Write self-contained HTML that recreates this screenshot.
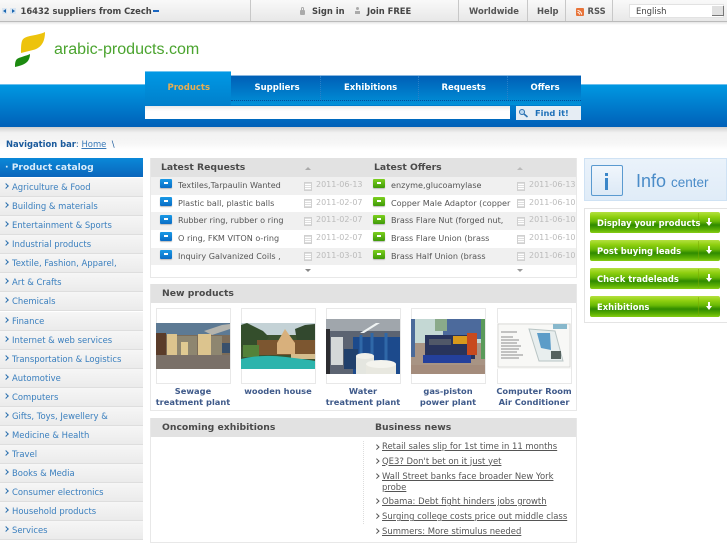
<!DOCTYPE html>
<html><head><meta charset="utf-8">
<style>
html,body{margin:0;padding:0;background:#fff}
#p{position:relative;width:727px;height:545px;overflow:hidden;font-family:"DejaVu Sans","Liberation Sans",sans-serif;font-size:8.45px;letter-spacing:0;background:#fff}
#p div,#p svg,#p a{position:absolute}
.t{white-space:nowrap;line-height:12px}
.b{font-weight:bold}
.top{color:#444;font-weight:bold;font-size:8.4px;top:5px}
.sep{top:0;width:1px;height:21px;background:#c8c8c8}
.nav{color:#fff;font-weight:bold;top:81.500px;font-size:8.5px}
.cat{left:0;width:143px;height:18px;background:linear-gradient(#f6f6f6,#ebebeb);border-bottom:1px solid #dedede}
.cat span{position:absolute;left:12px;top:3px;color:#3a7fbe;white-space:nowrap;line-height:12px}
.cat i{position:absolute;left:4px;top:6px;width:3px;height:3px;border-top:1.300px solid #2a6fae;border-right:1.300px solid #2a6fae;transform:rotate(45deg)}
.hd{background:#e2e2e2;height:19px}
.h{font-weight:bold;color:#4a4a4a;font-size:9.25px;white-space:nowrap;line-height:12px}
.r{height:18px;left:151px;width:425px}
.tx{color:#555;white-space:nowrap;line-height:12px;font-size:8.1px}
.dt{color:#bbb;white-space:nowrap;line-height:12px;font-size:8px}
.cal{width:6px;height:7px;border:1px solid #d0d0d0;background:repeating-linear-gradient(#dedede 0 1px,#fff 1px 2px)}
.ib{width:12px;height:9px;border-radius:1px;background:linear-gradient(#1a9ae6,#0a6cc4);box-shadow:0 1px 1px #bbb}
.ig{width:12px;height:9px;border-radius:1px;background:linear-gradient(#7cd01e,#3f9a08);box-shadow:0 1px 1px #bbb}
.ib:after,.ig:after{content:"";position:absolute;left:4px;top:3px;width:4px;height:2px;background:#fff}
.th{width:73px;height:74px;border:1px solid #e8e8e8;background:#fff}
.cap{color:#3f5a8a;font-weight:bold;text-align:center;line-height:11px;width:90px;font-size:8.3px}
.gb{left:590px;width:130px;height:21px;border-radius:2px;background:linear-gradient(#b4e040 0,#90d010 22%,#68b806 45%,#2f8a00 62%,#5cb004 85%,#86cc14 100%)}
.gb span{position:absolute;left:7px;top:4.500px;color:#fff;font-weight:bold;white-space:nowrap;line-height:12px;font-size:8.4px}
.gb i{position:absolute;left:116px;top:10px;width:0;height:0;border-top:4px solid #fff;border-left:3px solid transparent;border-right:3px solid transparent}
.gb b{position:absolute;left:118px;top:6px;width:2px;height:4px;background:#fff}
.gb u{position:absolute;left:108px;top:1px;width:1px;height:19px;background:rgba(120,170,0,.5)}
.n{left:382px;color:#555;text-decoration:underline;white-space:nowrap;line-height:11px}
.ar{left:375px;width:2.500px;height:2.500px;border-top:1px solid #555;border-right:1px solid #555;transform:rotate(45deg)}
</style></head><body><div id="p">

<div style="left:0;top:0;width:727px;height:21px;background:linear-gradient(#f9f9f9,#e8e8e8);border-bottom:1px solid #bbb"></div>
<div style="left:0;top:22px;width:727px;height:3px;background:linear-gradient(#e4e4e4,#fff)"></div>
<div style="left:2px;top:8px;width:5px;height:6px;background:#d8e4f0"></div>
<div style="left:10px;top:8px;width:6px;height:6px;background:#d8e4f0"></div>
<div style="left:3px;top:9px;border-right:3px solid #1a66b0;border-top:2px solid transparent;border-bottom:2px solid transparent"></div>
<div style="left:12px;top:9px;border-left:3px solid #1a66b0;border-top:2px solid transparent;border-bottom:2px solid transparent"></div>
<div class="t top" style="left:20.500px">16432 suppliers from Czech</div>
<div style="left:153px;top:10px;width:6px;height:2px;background:#1a66c0"></div>
<div class="sep" style="left:250px"></div>
<div style="left:300px;top:10px;width:5px;height:5px;background:#aaa;border-radius:1px"></div>
<div style="left:301px;top:7px;width:3px;height:4px;border:1px solid #aaa;border-bottom:0;border-radius:2px 2px 0 0;box-sizing:border-box"></div>
<div class="t top" style="left:312px">Sign in</div>
<div style="left:356px;top:7px;width:3px;height:3px;background:#aaa;border-radius:2px"></div>
<div style="left:355px;top:11px;width:5px;height:3px;background:#aaa"></div>
<div class="t top" style="left:367px">Join FREE</div>
<div class="sep" style="left:458px"></div>
<div class="t top" style="left:469px;color:#555">Worldwide</div>
<div class="sep" style="left:527px"></div>
<div class="t top" style="left:537px;color:#555">Help</div>
<div class="sep" style="left:565px"></div>
<div style="left:576px;top:8px;width:8px;height:8px;background:#e8743a;border-radius:1px"></div>
<svg style="left:576px;top:8px" width="8" height="8"><path d="M1.500 2.500A4 4 0 0 1 5.500 6.500M1.500 4.500A2 2 0 0 1 3.500 6.500" stroke="#fff" fill="none"/></svg>
<div class="t top" style="left:587.500px;color:#555">RSS</div>
<div class="sep" style="left:612px"></div>
<div style="left:629px;top:4px;width:93px;height:12px;background:#fff;border:1px solid #e2e2e2"></div>
<div class="t" style="left:636px;top:5px;color:#444">English</div>
<div style="left:712px;top:6px;width:11px;height:9px;background:#e0e0e0;border-right:1px solid #777;border-bottom:1px solid #777"></div>

<svg style="left:0;top:0" width="60" height="75"><path d="M21 53C21 48 21 44 22 41C23 38 26 37 30 36C35 35 41 34 45 32C45 37 44 41 42 44C40 47 37 49 33 50C29 51 25 52 21 53Z" fill="#edc30c"/><path d="M15 67C15 64 15 61 17 59C20 57 26 56 30 54C30 57 29 60 27 62C24 65 19 66 15 67Z" fill="#1c8a10"/></svg>
<div class="t" style="left:54px;top:39px;font-family:'Liberation Sans',sans-serif;font-size:16.05px;line-height:20px;color:#4ba42f">arabic-products.com</div>

<div style="left:0;top:84px;width:727px;height:43px;background:linear-gradient(#0098e2,#0060b8);border-top:1px solid #6cc0ee;box-sizing:border-box"></div>
<div style="left:0;top:127px;width:727px;height:23px;background:linear-gradient(#cfcfcf,#f2f2f2 25%,#f6f6f6 70%,#fff)"></div>
<div style="left:231px;top:75px;width:350px;height:30px;background:linear-gradient(#005fb6,#0090d8);border-top:1px solid #8ab8e0;box-sizing:border-box"></div>
<div style="left:231px;top:100px;width:350px;height:0;border-top:1px dotted #004f9a"></div>
<div style="left:320px;top:76px;width:0;height:24px;border-left:1px dotted #2a80c8"></div>
<div style="left:418px;top:76px;width:0;height:24px;border-left:1px dotted #2a80c8"></div>
<div style="left:507px;top:76px;width:0;height:24px;border-left:1px dotted #2a80c8"></div>
<div style="left:145px;top:71px;width:86px;height:34px;background:linear-gradient(#0098e4,#0080cc);border-top:1px solid #70c4f0;box-sizing:border-box"></div>
<div class="t nav" style="left:167.500px;color:#e6ae52">Products</div>
<div class="t nav" style="left:254.500px">Suppliers</div>
<div class="t nav" style="left:344px">Exhibitions</div>
<div class="t nav" style="left:441.500px">Requests</div>
<div class="t nav" style="left:530.500px">Offers</div>
<div style="left:145px;top:106px;width:365px;height:13px;background:linear-gradient(#e8e8e8,#fff 40%)"></div>
<div style="left:516px;top:106px;width:65px;height:14px;background:#e6edf4"></div>
<svg style="left:518px;top:108px" width="11" height="10"><circle cx="4" cy="4" r="2.500" fill="#bcd8f0" stroke="#2a70b0"/><path d="M6 6L9.500 9" stroke="#2a70b0" stroke-width="1.500"/></svg>
<div class="t b" style="left:535px;top:107px;color:#1e70b8;font-size:8.3px">Find it!</div>

<div class="t" style="left:6px;top:137.500px;color:#1a5a9c"><b style="font-size:8.4px">Navigation bar</b>: <span style="color:#3a7ab8;text-decoration:underline">Home</span>&nbsp; \</div>

<div style="left:0;top:158px;width:143px;height:19px;background:linear-gradient(#0a88d8,#0a66bc)"></div>
<div class="t b" style="left:5px;top:161.500px;color:#d8ecfa;font-size:9.2px">&middot;&nbsp;Product catalog</div>
<div class="cat" style="top:178px"><i></i><span>Agriculture &amp; Food</span></div>
<div class="cat" style="top:197px"><i></i><span>Building &amp; materials</span></div>
<div class="cat" style="top:216px"><i></i><span>Entertainment &amp; Sports</span></div>
<div class="cat" style="top:235px"><i></i><span>Industrial products</span></div>
<div class="cat" style="top:254px"><i></i><span>Textile, Fashion, Apparel,</span></div>
<div class="cat" style="top:273px"><i></i><span>Art &amp; Crafts</span></div>
<div class="cat" style="top:292px"><i></i><span>Chemicals</span></div>
<div class="cat" style="top:312px"><i></i><span>Finance</span></div>
<div class="cat" style="top:331px"><i></i><span>Internet &amp; web services</span></div>
<div class="cat" style="top:350px"><i></i><span>Transportation &amp; Logistics</span></div>
<div class="cat" style="top:369px"><i></i><span>Automotive</span></div>
<div class="cat" style="top:388px"><i></i><span>Computers</span></div>
<div class="cat" style="top:407px"><i></i><span>Gifts, Toys, Jewellery &amp;</span></div>
<div class="cat" style="top:426px"><i></i><span>Medicine &amp; Health</span></div>
<div class="cat" style="top:445px"><i></i><span>Travel</span></div>
<div class="cat" style="top:464px"><i></i><span>Books &amp; Media</span></div>
<div class="cat" style="top:483px"><i></i><span>Consumer electronics</span></div>
<div class="cat" style="top:502px"><i></i><span>Household products</span></div>
<div class="cat" style="top:521px"><i></i><span>Services</span></div>

<div style="left:150px;top:158px;width:425px;height:118px;border:1px solid #e8e8e8"></div>
<div class="hd" style="left:151px;top:158px;width:425px"></div>
<div class="h" style="left:161px;top:162px">Latest Requests</div>
<div class="h" style="left:374px;top:162px">Latest Offers</div>
<div style="left:305px;top:166.500px;border-bottom:3.500px solid #aaa;border-left:3.500px solid transparent;border-right:3.500px solid transparent"></div>
<div style="left:517px;top:166.500px;border-bottom:3.500px solid #bbb;border-left:3.500px solid transparent;border-right:3.500px solid transparent"></div>
<div class="r" style="top:177px;background:#f0f0f0"></div>
<div class="r" style="top:212px;background:#f0f0f0"></div>
<div class="r" style="top:248px;height:17px;background:#f0f0f0"></div>

<div class="ib" style="left:160px;top:179px"></div><div class="t tx" style="left:178px;top:179px">Textiles,Tarpaulin Wanted</div><div class="cal" style="left:304px;top:182px"></div><div class="t dt" style="left:316px;top:179px">2011-06-13</div>
<div class="ib" style="left:160px;top:197px"></div><div class="t tx" style="left:178px;top:197px">Plastic ball, plastic balls</div><div class="cal" style="left:304px;top:199px"></div><div class="t dt" style="left:316px;top:197px">2011-02-07</div>
<div class="ib" style="left:160px;top:215px"></div><div class="t tx" style="left:178px;top:214px">Rubber ring, rubber o ring</div><div class="cal" style="left:304px;top:217px"></div><div class="t dt" style="left:316px;top:214px">2011-02-07</div>
<div class="ib" style="left:160px;top:232px"></div><div class="t tx" style="left:178px;top:232px">O ring, FKM VITON o-ring</div><div class="cal" style="left:304px;top:235px"></div><div class="t dt" style="left:316px;top:232px">2011-02-07</div>
<div class="ib" style="left:160px;top:250px"></div><div class="t tx" style="left:178px;top:250px">Inquiry Galvanized Coils ,</div><div class="cal" style="left:304px;top:252px"></div><div class="t dt" style="left:316px;top:250px">2011-03-01</div>

<div class="ig" style="left:373px;top:179px"></div><div class="t tx" style="left:391px;top:179px">enzyme,glucoamylase</div><div class="cal" style="left:517px;top:182px"></div><div class="t dt" style="left:529px;top:179px">2011-06-13</div>
<div class="ig" style="left:373px;top:197px"></div><div class="t tx" style="left:391px;top:197px">Copper Male Adaptor (copper</div><div class="cal" style="left:517px;top:199px"></div><div class="t dt" style="left:529px;top:197px">2011-06-10</div>
<div class="ig" style="left:373px;top:215px"></div><div class="t tx" style="left:391px;top:214px">Brass Flare Nut (forged nut,</div><div class="cal" style="left:517px;top:217px"></div><div class="t dt" style="left:529px;top:214px">2011-06-10</div>
<div class="ig" style="left:373px;top:232px"></div><div class="t tx" style="left:391px;top:232px">Brass Flare Union (brass</div><div class="cal" style="left:517px;top:235px"></div><div class="t dt" style="left:529px;top:232px">2011-06-10</div>
<div class="ig" style="left:373px;top:250px"></div><div class="t tx" style="left:391px;top:250px">Brass Half Union (brass</div><div class="cal" style="left:517px;top:252px"></div><div class="t dt" style="left:529px;top:250px">2011-06-10</div>
<div style="left:305px;top:269px;border-top:3.500px solid #888;border-left:3.500px solid transparent;border-right:3.500px solid transparent"></div>
<div style="left:517px;top:269px;border-top:3.500px solid #999;border-left:3.500px solid transparent;border-right:3.500px solid transparent"></div>

<div style="left:150px;top:284px;width:425px;height:125px;border:1px solid #e8e8e8"></div>
<div class="hd" style="left:151px;top:284px;width:425px"></div>
<div class="h" style="left:162px;top:288px">New products</div>

<div class="th" style="left:156px;top:308px"></div>
<svg style="left:156px;top:323px" width="74" height="46" viewBox="0 0 74 46"><rect width="74" height="46" fill="#6e6458"/><rect width="74" height="13" fill="#5d7a94"/><rect y="12" width="74" height="20" fill="#7c6c58"/><rect y="10" width="10" height="22" fill="#5a3c2a"/><path d="M48 8L66 2L74 1V6L56 12Z" fill="#b4b4ae"/><rect x="21" y="13" width="20" height="19" fill="#8e8670"/><rect x="55" y="13" width="11" height="19" fill="#8e8670"/><rect x="66" y="20" width="8" height="10" fill="#38506c"/><rect x="11" y="11" width="10" height="21" fill="#dcc48e"/><rect x="42" y="11" width="13" height="21" fill="#dcc48e"/><rect x="25" y="19" width="7" height="13" fill="#e0ca92"/><rect y="32" width="74" height="14" fill="#7a7068"/></svg>

<div class="th" style="left:241px;top:308px"></div>
<svg style="left:241px;top:323px" width="74" height="46" viewBox="0 0 74 46"><rect width="74" height="46" fill="#3c5230"/><rect width="74" height="12" fill="#c4d2d6"/><path d="M0 2L6 0L14 4L22 8L28 14L20 24H0Z" fill="#344e2c"/><path d="M54 6L64 2L74 1V18H56Z" fill="#32482e"/><rect x="16" y="17" width="58" height="15" fill="#7c5630"/><path d="M36 20L44 6L54 20V31H36Z" fill="#d8b07c"/><rect x="2" y="22" width="16" height="12" fill="#54823a"/><rect x="50" y="31" width="24" height="5" fill="#d4bc8c"/><path d="M0 46V36Q20 31 45 34T74 38V46Z" fill="#2cb4ac"/></svg>

<div class="th" style="left:326px;top:308px"></div>
<svg style="left:326px;top:319px" width="74" height="55" viewBox="0 0 74 55"><rect width="74" height="55" fill="#5c6472"/><rect width="74" height="12" fill="#a0a6ac"/><path d="M34 14L50 4H54L38 14Z" fill="#f0f4f4"/><rect x="0" y="10" width="4" height="45" fill="#2c2c30"/><rect x="5" y="18" width="12" height="28" fill="#d4d8d8"/><rect x="27" y="18" width="47" height="37" fill="#1c4a8c"/><path d="M35 16V44M46 14V44M60 14V44" stroke="#2f68a8" stroke-width="3"/><rect x="18" y="30" width="14" height="20" fill="#20406c"/><rect x="30" y="37" width="18" height="18" fill="#e4e6e0"/><ellipse cx="39" cy="37" rx="9" ry="3" fill="#f0f0ea"/><rect x="40" y="45" width="30" height="10" fill="#e8e8e0"/><ellipse cx="55" cy="45" rx="15" ry="4" fill="#f4f4ee"/></svg>

<div class="th" style="left:411px;top:308px"></div>
<svg style="left:411px;top:319px" width="74" height="55" viewBox="0 0 74 55"><rect width="74" height="55" fill="#a89484"/><rect width="74" height="24" fill="#c4d8d4"/><rect x="32" y="0" width="42" height="20" fill="#4c6a9c"/><rect x="24" y="0" width="12" height="12" fill="#8aaa8a"/><rect x="70" y="0" width="4" height="40" fill="#5a9a5a"/><rect x="0" y="0" width="4" height="38" fill="#4a6a9a"/><rect x="14" y="16" width="50" height="24" fill="#28345c"/><rect x="12" y="36" width="48" height="8" fill="#24409c"/><rect x="42" y="17" width="14" height="8" fill="#d89a1c"/><rect x="56" y="14" width="10" height="22" fill="#c84a1e"/><rect x="18" y="20" width="22" height="6" fill="#505868"/><rect y="46" width="74" height="9" fill="#a48c7c"/></svg>

<div class="th" style="left:497px;top:308px"></div>
<svg style="left:497px;top:323px" width="74" height="46" viewBox="0 0 74 46"><rect width="74" height="46" fill="#f8f8f6"/><rect x="1" y="1" width="72" height="43" fill="none" stroke="#c8c8c8" stroke-width=".6"/><path d="M4 9H20M4 14H16M4 17H22M4 20H20M4 23H24M4 26H22M4 29H20M4 32H26M4 35H22" stroke="#8c8c8c"/><path d="M32 6L58 8L66 38L42 38Z" fill="#e8eeee" stroke="#b8c4c4"/><path d="M40 10L53 10L54 27L44 25Z" fill="#5c9cc8"/><rect x="56" y="1" width="14" height="5" fill="#88b8cc"/><rect x="54" y="28" width="10" height="8" fill="#56625e"/></svg>

<div class="cap" style="left:148px;top:386px">Sewage<br>treatment plant</div>
<div class="cap" style="left:233px;top:386px">wooden house</div>
<div class="cap" style="left:318px;top:386px">Water<br>treatment plant</div>
<div class="cap" style="left:403px;top:386px">gas-piston<br>power plant</div>
<div class="cap" style="left:489px;top:386px">Computer Room<br>Air Conditioner</div>

<div style="left:150px;top:418px;width:425px;height:123px;border:1px solid #e8e8e8"></div>
<div class="hd" style="left:151px;top:418px;width:425px"></div>
<div class="h" style="left:162px;top:422px">Oncoming exhibitions</div>
<div class="h" style="left:375px;top:422px">Business news</div>
<div style="left:363px;top:441px;height:83px;width:0;border-left:1px dotted #ddd"></div>
<div class="ar" style="top:445px"></div><div class="n" style="top:441px">Retail sales slip for 1st time in 11 months</div>
<div class="ar" style="top:459px"></div><div class="n" style="top:455.500px">QE3? Don't bet on it just yet</div>
<div class="ar" style="top:474px"></div><div class="n" style="top:470.500px">Wall Street banks face broader New York<br>probe</div>
<div class="ar" style="top:499px"></div><div class="n" style="top:496px">Obama: Debt fight hinders jobs growth</div>
<div class="ar" style="top:514px"></div><div class="n" style="top:511px">Surging college costs price out middle class</div>
<div class="ar" style="top:529px"></div><div class="n" style="top:525.500px">Summers: More stimulus needed</div>

<div style="left:584px;top:158px;width:143px;height:43px;background:linear-gradient(#eaf2fa,#e0ecf8);border:1px solid #cfe2f4;box-sizing:border-box"></div>
<div style="left:591px;top:165px;width:30px;height:29px;border:1px solid #5a9ad0;border-radius:2px;background:linear-gradient(#f0f6fc,#dce9f6)"></div>
<div style="left:605px;top:173px;width:3px;height:3px;background:#3a86c8"></div>
<div style="left:605px;top:178px;width:3px;height:12px;background:#3a86c8"></div>
<div class="t" style="left:636px;top:171px;font-family:'Liberation Sans',sans-serif;font-size:18px;line-height:20px;color:#4a8cc8">Info <span style="font-size:13.500px">center</span></div>

<div style="left:584px;top:208px;width:142px;height:113px;border:1px solid #e4e4e4"></div>
<div class="gb" style="top:212px"><u></u><span>Display your products</span><b></b><i></i></div>
<div class="gb" style="top:240px"><u></u><span>Post buying leads</span><b></b><i></i></div>
<div class="gb" style="top:268px"><u></u><span>Check tradeleads</span><b></b><i></i></div>
<div class="gb" style="top:296px"><u></u><span>Exhibitions</span><b></b><i></i></div>

</div></body></html>
